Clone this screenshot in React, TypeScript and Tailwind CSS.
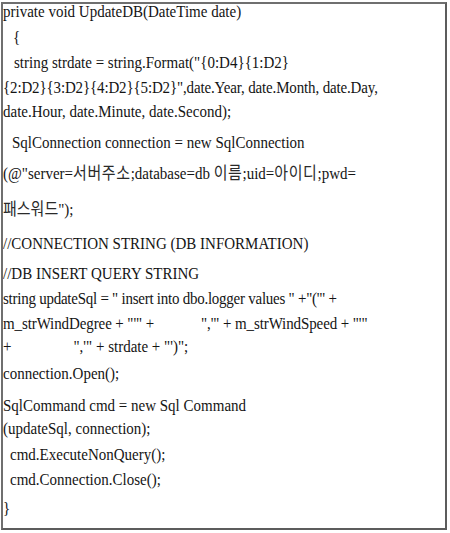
import React from "react";

const KR = "font-['Noto_Sans_CJK_KR',sans-serif] text-[15px] leading-[0px] text-[#2a2a2a]";

type Line = { h: string; cls?: string; content: React.ReactNode };

const lines: Line[] = [
  { h: "h-[23px]", content: "private void UpdateDB(DateTime date)" },
  { h: "h-[21px]", cls: "pl-[10px]", content: "{" },
  { h: "h-[22px]", cls: "pl-[11px]", content: 'string strdate = string.Format("{0:D4}{1:D2}' },
  { h: "h-[20px]", cls: "tracking-[-0.15px]", content: '{2:D2}{3:D2}{4:D2}{5:D2}",date.Year, date.Month, date.Day,' },
  { h: "h-[27px]", content: "date.Hour, date.Minute, date.Second);" },
  { h: "h-[27px]", cls: "pl-[9px]", content: "SqlConnection connection = new SqlConnection" },
  {
    h: "h-[31px]",
    content: (
      <>
        (@"server=
        <span className={`${KR} tracking-[0.6px]`}>서버주소</span>
        ;database=db{" "}
        <span className={`${KR} tracking-[0.6px]`}>이름</span>
        ;uid=
        <span className={`${KR} tracking-[0.6px]`}>아이디</span>
        ;pwd=
      </>
    ),
  },
  {
    h: "h-[29px]",
    content: (
      <>
        <span className={KR}>패스워드</span>");
      </>
    ),
  },
  { h: "h-[26px]", content: "//CONNECTION STRING (DB INFORMATION)" },
  { h: "h-[22px]", content: "//DB INSERT QUERY STRING" },
  { h: "h-[21px]", cls: "tracking-[-0.25px]", content: 'string updateSql = " insert into dbo.logger values " +"(\'" +' },
  {
    h: "h-[20px]",
    cls: "tracking-[-0.1px]",
    content: (
      <>
        m_strWindDegree + "'" +<span className="inline-block w-[47px]" />",'" + m_strWindSpeed + "'"
      </>
    ),
  },
  {
    h: "h-[23px]",
    content: (
      <>
        +<span className="inline-block w-[62px]" />",'" + strdate + "')";
      </>
    ),
  },
  { h: "h-[28px]", content: "connection.Open();" },
  { h: "h-[20px]", content: "SqlCommand cmd = new Sql Command" },
  { h: "h-[22px]", content: "(updateSql, connection);" },
  { h: "h-[22px]", cls: "pl-[7px]", content: "cmd.ExecuteNonQuery();" },
  { h: "h-[25px]", cls: "pl-[7px]", content: "cmd.Connection.Close();" },
  { h: "h-[20px]", content: "}" },
];

export default function App() {
  return (
    <div className="w-[450px] h-[533px] bg-white pt-[2px] pl-[1px]">
      <div className="w-[446px] h-[528px] border-2 border-[#6f6f6f] border-r-[#5c5c5c] border-b-[#5c5c5c] overflow-hidden font-['Liberation_Serif',serif] text-[15px] text-[#141414]">
        <div className="origin-top scale-y-[1.16]">
          {lines.map((l, i) => (
            <div key={i} className={`${l.h} ${l.cls ?? ""} leading-[12px] whitespace-pre`}>
              {l.content}
            </div>
          ))}
        </div>
      </div>
    </div>
  );
}
